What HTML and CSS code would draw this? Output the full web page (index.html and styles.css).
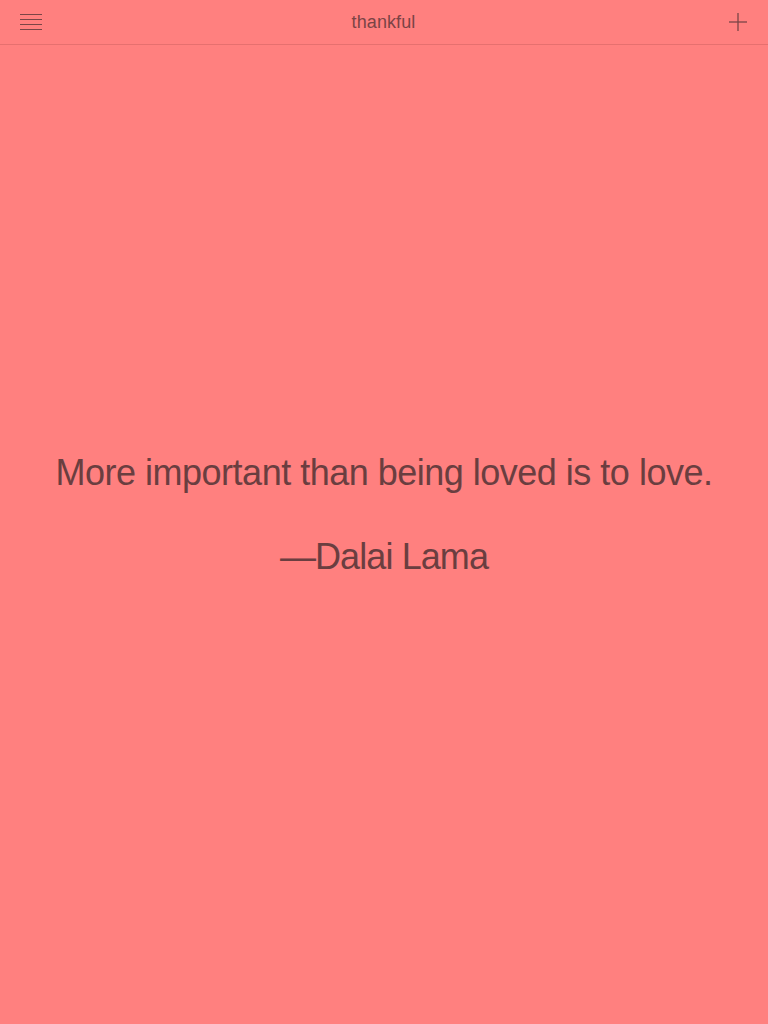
FILE: index.html
```html
<!DOCTYPE html>
<html>
<head>
<meta charset="utf-8">
<link rel="stylesheet" href="styles.css">
</head>
<body>
<div class="app">
  <header class="bar">
    <button class="icon-btn menu" aria-label="menu">
      <svg width="22" height="18" viewBox="0 0 22 18"><g stroke="#7a4446" stroke-width="1"><line x1="0" y1="1.5" x2="22" y2="1.5"/><line x1="0" y1="6.5" x2="22" y2="6.5"/><line x1="0" y1="11.5" x2="22" y2="11.5"/><line x1="0" y1="16.5" x2="22" y2="16.5"/></g></svg>
    </button>
    <div class="title">thankful</div>
    <button class="icon-btn add" aria-label="add">
      <svg width="18" height="18" viewBox="0 0 18 18"><g stroke="#7a4446" stroke-width="1.3"><line x1="9" y1="0" x2="9" y2="18"/><line x1="0" y1="9" x2="18" y2="9"/></g></svg>
    </button>
  </header>
  <main class="content">
    <p class="quote">More important than being loved is to love.</p>
    <p class="author">—Dalai Lama</p>
  </main>
</div>
</body>
</html>
```
FILE: styles.css
```css
html, body {
  margin: 0;
  padding: 0;
  height: 100%;
}
body {
  background: #ff807f;
  font-family: "Liberation Sans", Arial, sans-serif;
  color: #6a3e40;
}
.app {
  display: flex;
  flex-direction: column;
  height: 100%;
}
.bar {
  height: 44px;
  border-bottom: 1px solid #e6706f;
  display: flex;
  align-items: center;
  justify-content: space-between;
  padding: 0 20px;
  flex: none;
}
.icon-btn {
  background: none;
  border: 0;
  padding: 0;
  display: flex;
  align-items: center;
  width: 22px;
  height: 44px;
  cursor: pointer;
}
.add {
  justify-content: flex-end;
  margin-right: 1px;
}
.title {
  font-size: 18px;
  color: #7a4446;
  letter-spacing: 0.1px;
}
.content {
  flex: 1;
  display: flex;
  flex-direction: column;
  align-items: center;
  justify-content: center;
  padding-bottom: 40px;
}
.quote, .author {
  margin: 0;
  font-size: 36px;
  line-height: 44px;
  letter-spacing: -0.5px;
  text-align: center;
}
.author {
  margin-top: 40px;
  letter-spacing: -0.9px;
}
```
